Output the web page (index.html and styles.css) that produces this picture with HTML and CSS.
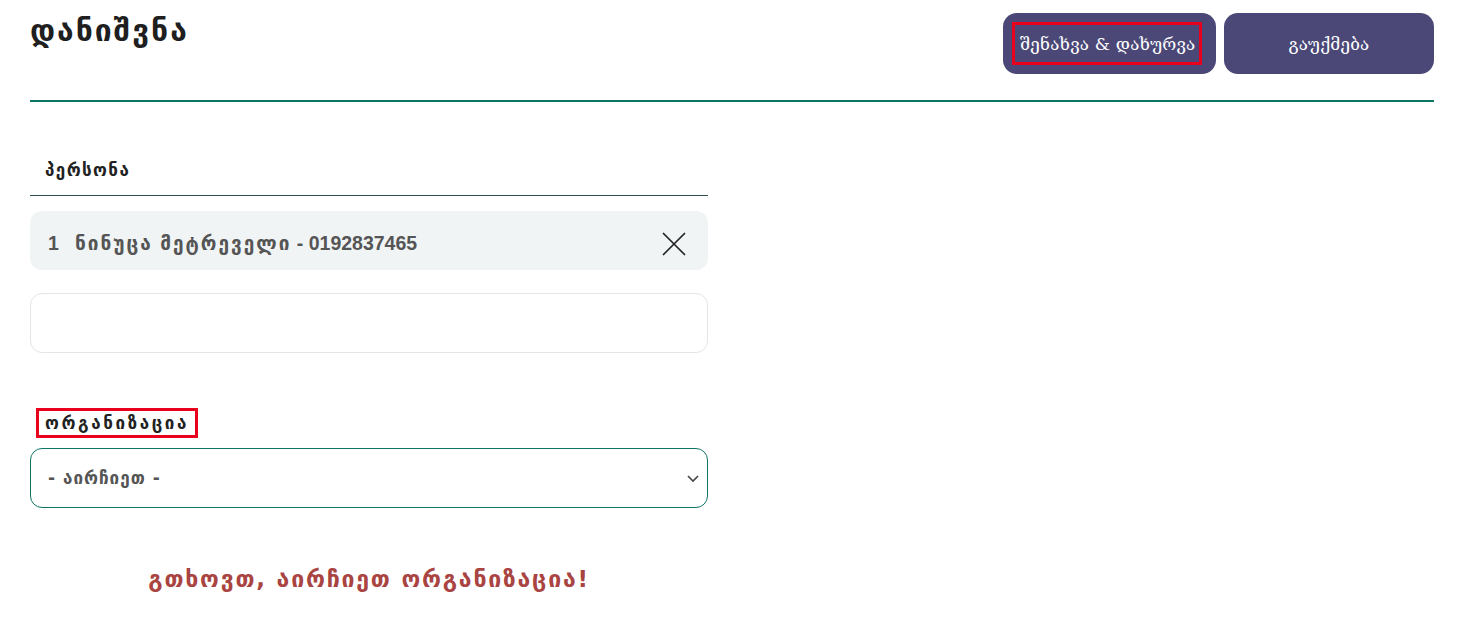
FILE: index.html
```html
<!DOCTYPE html>
<html lang="ka">
<head>
    <meta charset="UTF-8">
    <meta name="viewport" content="width=device-width, initial-scale=1.0">
    <title>დანიშვნა</title>
    <link rel="stylesheet" href="styles.css">
</head>
<body>

<div class="page">
    <div class="page-header">
        <h1 class="page-title">დანიშვნა</h1>
        <div class="header-actions">
            <button class="btn btn-primary"><span class="highlight">შენახვა &amp; დახურვა</span></button>
            <button class="btn">გაუქმება</button>
        </div>
    </div>

    <div class="form-col">
        <div class="section-label">პერსონა</div>

        <div class="person-row">
            <span class="person-num">1</span>
            <span class="person-name"><span class="ka">ნინუცა მეტრეველი</span> - 0192837465</span>
            <button class="remove-btn" aria-label="remove">
                <svg width="26" height="26" viewBox="0 0 26 26"><path d="M2 2 L24 24 M24 2 L2 24" stroke="#222" stroke-width="1.7" fill="none"/></svg>
            </button>
        </div>

        <input class="text-input" type="text">

        <label class="field-label"><span class="highlight-box">ორგანიზაცია</span></label>
        <div class="select-wrap">
            <select class="select">
                <option>- აირჩიეთ -</option>
            </select>
            <svg class="chevron" width="12" height="8" viewBox="0 0 12 8"><path d="M1 1 L6 6 L11 1" stroke="#444" stroke-width="1.6" fill="none"/></svg>
        </div>

        <p class="error-msg">გთხოვთ, აირჩიეთ ორგანიზაცია!</p>
    </div>
</div>

</body>
</html>
```

FILE: styles.css
```css
body { margin: 0; background: #fff; color: #222; font-family: "DejaVu Sans", "Noto Sans", sans-serif; }
.page {
    padding: 13px 23px 0 30px;
}
.page-header {
    display: flex;
    justify-content: space-between;
    align-items: flex-start;
    border-bottom: 2px solid #0e7463;
    padding-bottom: 26px;
}
.page-title {
    margin: 0;
    font-size: 30px;
    letter-spacing: 2px;
    font-weight: bold;
    color: #1f1f1f;
    line-height: 36px;
}
.header-actions {
    display: flex;
    gap: 8px;
}
.btn {
    background-color: #4b4878;
    color: #fff;
    border: none;
    border-radius: 14px;
    height: 61px;
    width: 210px;
    font-family: "DejaVu Serif", serif;
    font-size: 17px;
    letter-spacing: 0.2px;
    cursor: pointer;
    display: flex;
    align-items: center;
    justify-content: center;
    padding: 0;
}
.btn-primary {
    width: 213px;
    justify-content: flex-start;
    padding-left: 9px;
}
.highlight {
    border: 3px solid #e8001c;
    padding: 0 4px 0 5px;
    height: 37px;
    display: flex;
    align-items: center;
}
.form-col {
    width: 678px;
    padding-top: 56px;
}
.section-label {
    font-weight: bold;
    font-size: 17px;
    letter-spacing: 1.4px;
    line-height: 24px;
    color: #222;
    padding: 0 0 13px 15px;
    border-bottom: 1px solid #2f4f4f;
}
.person-row {
    box-sizing: border-box;
    margin-top: 15px;
    background: #f0f4f5;
    border-radius: 12px;
    height: 59px;
    display: flex;
    align-items: center;
    padding: 6px 21px 0 18px;
    font-family: "Liberation Sans", "DejaVu Sans", sans-serif;
    font-weight: bold;
    font-size: 19.5px;
    color: #555;
}
.person-num {
    width: 27px;
}
.person-name {
    flex: 1;
}
.person-name .ka {
    font-size: 19px;
    letter-spacing: 2px;
}
.remove-btn {
    background: transparent;
    border: none;
    padding: 0;
    display: flex;
    cursor: pointer;
}
.text-input {
    display: block;
    box-sizing: border-box;
    width: 100%;
    height: 60px;
    margin-top: 23px;
    border: 1px solid #e5e5e5;
    border-radius: 12px;
    outline: none;
}
.field-label {
    display: flex;
    margin-top: 55px;
    padding-left: 6px;
}
.highlight-box {
    display: block;
    border: 3px solid #e8001c;
    padding: 0 6px 0 6px;
    font-weight: bold;
    font-size: 17px;
    line-height: 24px;
    letter-spacing: 2.6px;
    color: #222;
}
.select-wrap {
    position: relative;
    margin-top: 10px;
}
.select {
    display: block;
    appearance: none;
    width: 100%;
    height: 60px;
    border: 1px solid #0e7463;
    border-radius: 12px;
    background: #fff;
    padding: 0 17px;
    font-family: "DejaVu Sans", sans-serif;
    font-weight: bold;
    font-size: 17px;
    letter-spacing: 1px;
    color: #555;
    outline: none;
}
.chevron {
    position: absolute;
    right: 9px;
    top: 27px;
    pointer-events: none;
}
.error-msg {
    margin: 57px 0 0;
    text-align: center;
    font-weight: bold;
    font-size: 23px;
    letter-spacing: 1.8px;
    line-height: 28px;
    color: #a94442;
}
```
